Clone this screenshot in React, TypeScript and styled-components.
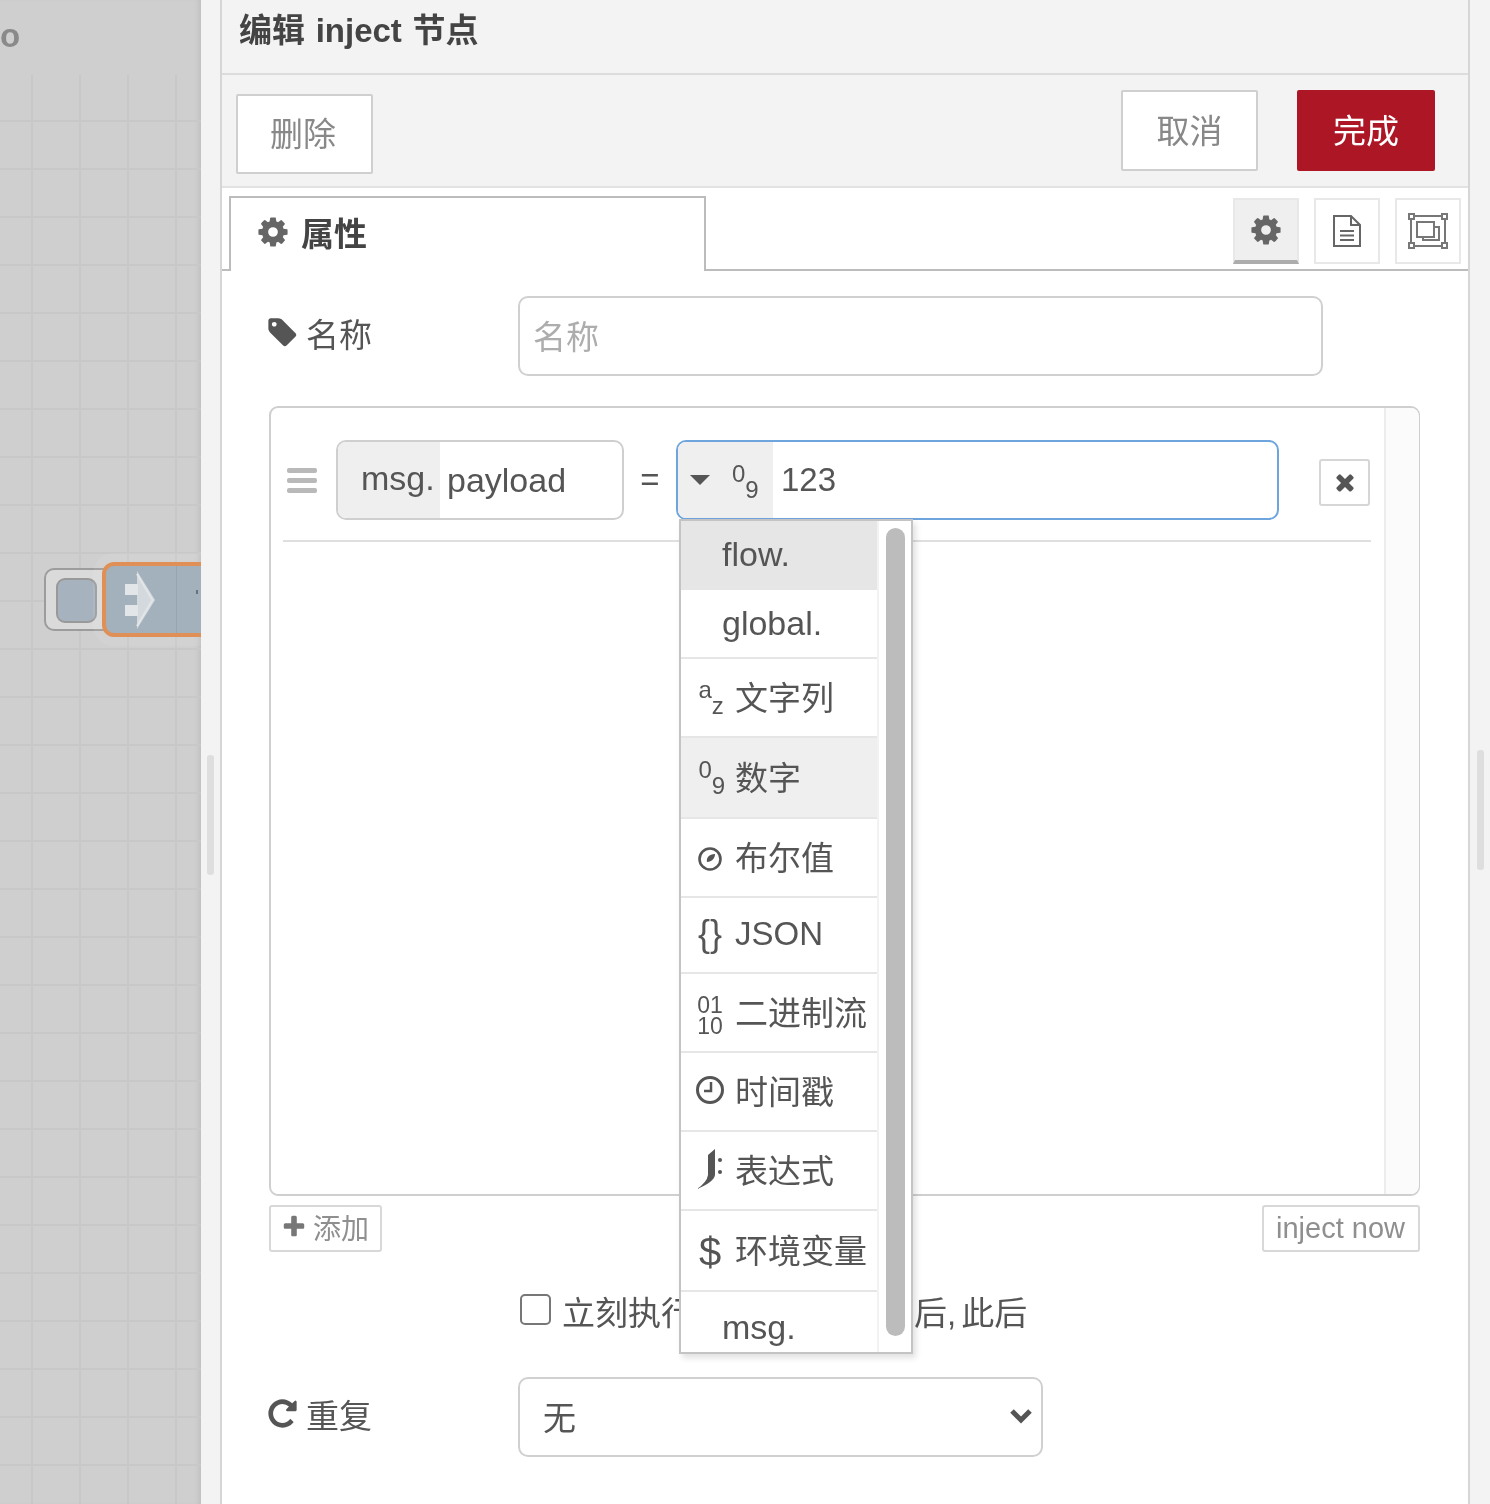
import React from 'react';
import styled, { createGlobalStyle } from 'styled-components';

const GlobalStyle = createGlobalStyle`
  html, body {
    margin: 0;
    height: 100%;
    overflow: hidden;
    background: #f3f3f3;
  }
  * { box-sizing: border-box; }
  #root {
    font-family: "Liberation Sans", "Noto Sans CJK SC", sans-serif;
    font-size: 33px;
    color: #555;
  }
`;

const Page = styled.div`
  width: 1490px;
  height: 1504px;
  display: flex;
  overflow: hidden;
  filter: blur(0.5px);
`;

/* workspace on the left, dimmed while the tray is open */
const Workspace = styled.div`
  width: 201px;
  flex: none;
  display: flex;
  flex-direction: column;
  background: #cfcfcf;
  box-shadow: inset -5px 0 5px -3px #bdbdbd;
`;

const WorkspaceTab = styled.div`
  height: 75px;
  padding-top: 16px;
  font-weight: bold;
  color: #8a8a8a;
  line-height: 40px;
`;

const Grid = styled.div`
  flex: 1;
  position: relative;
  overflow: hidden;
  background-image:
    linear-gradient(to right, #c8c8c8 2px, transparent 2px),
    linear-gradient(to bottom, #c8c8c8 2px, transparent 2px);
  background-size: 48px 48px;
  background-position: 31px 45px;
`;

const NodeButton = styled.div`
  position: absolute;
  left: 44px;
  top: 493px;
  width: 70px;
  height: 63px;
  padding: 8px 10px;
  background: #dadada;
  border: 2px solid #9c9c9c;
  border-radius: 10px;
`;

const NodeButtonFace = styled.div`
  width: 41px;
  height: 45px;
  background: #a6b2bd;
  border: 2px solid #999;
  border-radius: 9px;
`;

const NodeBody = styled.div`
  position: absolute;
  left: 102px;
  top: 487px;
  width: 110px;
  height: 75px;
  display: flex;
  background: #a3b1bd;
  border: 4px solid #e08f56;
  border-radius: 12px;
  box-shadow: 0 0 0 9px rgba(255, 255, 255, 0.08);
`;

const NodeIcon = styled.div`
  width: 71px;
  padding: 3px 0 0 16px;
  border-right: 1px solid #97a5b1;
`;

const NodeLabelEdge = styled.div`
  width: 2px;
  height: 4px;
  margin: 24px 0 0 19px;
  background: #66727c;
`;

const Gutter = styled.div<{ $left?: boolean }>`
  width: ${(p) => (p.$left ? 19 : 20)}px;
  flex: none;
  display: flex;
  justify-content: center;
  padding-top: ${(p) => (p.$left ? 755 : 750)}px;
  background: #f3f3f3;
`;

const GutterHandle = styled.div`
  width: 7px;
  height: 120px;
  background: #dedede;
  border-radius: 3px;
`;

const Tray = styled.div`
  width: 1250px;
  flex: none;
  display: flex;
  flex-direction: column;
  background: #fff;
  border-left: 2px solid #d6d6d6;
  border-right: 2px solid #d6d6d6;
`;

const TrayHeader = styled.div`
  height: 75px;
  padding: 11px 0 0 17px;
  background: #f3f3f3;
  border-bottom: 2px solid #dcdcdc;
  font-weight: bold;
  word-spacing: 1.5px;
  color: #444;
  line-height: 40px;
`;

const TrayToolbar = styled.div`
  height: 113px;
  display: flex;
  align-items: flex-start;
  gap: 39px;
  padding: 15px 33px 0 14px;
  background: #f3f3f3;
  border-bottom: 2px solid #e2e2e2;
`;

const ToolbarButton = styled.div<{ $primary?: boolean; $push?: boolean; $low?: boolean }>`
  width: ${(p) => (p.$primary ? 138 : 137)}px;
  height: ${(p) => (p.$low ? 80 : 81)}px;
  margin-top: ${(p) => (p.$low ? 4 : 0)}px;
  margin-right: ${(p) => (p.$push ? 'auto' : 0)};
  display: flex;
  align-items: center;
  justify-content: center;
  padding: 0 ${(p) => (p.$low ? 3 : 0)}px 4px 0;
  background: ${(p) => (p.$primary ? '#ad1625' : '#fff')};
  border: 2px solid ${(p) => (p.$primary ? '#ad1625' : '#cfcfcf')};
  border-radius: 2px;
  color: ${(p) => (p.$primary ? '#fff' : '#888')};
`;

const TabBar = styled.div`
  height: 83px;
  display: flex;
  align-items: flex-start;
  padding: 8px 7px 0 7px;
  border-bottom: 2px solid #bcbcbc;
`;

const Tab = styled.div`
  width: 477px;
  height: 75px;
  margin-bottom: -2px;
  display: flex;
  align-items: center;
  gap: 11px;
  padding: 0 0 6px 25px;
  background: #fff;
  border: 2px solid #bcbcbc;
  border-bottom: none;
  font-weight: bold;
  color: #444;
`;

const SideTools = styled.div`
  margin-left: auto;
  margin-top: 2px;
  display: flex;
  gap: 15px;
`;

const SideTool = styled.div<{ $active?: boolean }>`
  width: 66px;
  height: 66px;
  display: flex;
  align-items: center;
  justify-content: center;
  background: ${(p) => (p.$active ? '#efefef' : '#fff')};
  border: 2px solid #e8e8e8;
  border-bottom: ${(p) => (p.$active ? '4px solid #adadad' : '2px solid #e8e8e8')};
`;

const Form = styled.div`
  flex: 1;
  display: flex;
  flex-direction: column;
  padding: 25px 48px 0 47px;
`;

const FormRow = styled.div`
  display: flex;
  align-items: center;
`;

const FieldLabel = styled.div`
  width: 252px;
  margin-left: -3px;
  flex: none;
  display: flex;
  align-items: center;
  gap: 7px;
  margin-top: -7px;
`;

const TextField = styled.div<{ $width: number; $muted?: boolean }>`
  width: ${(p) => p.$width}px;
  height: 80px;
  display: flex;
  align-items: center;
  justify-content: space-between;
  padding: 0 8px 2px ${(p) => (p.$muted ? 13 : 23)}px;
  border: 2px solid #d0d0d0;
  border-radius: 10px;
  color: ${(p) => (p.$muted ? '#adadad' : '#555')};
`;

const ListBox = styled.div`
  height: 790px;
  margin-top: 30px;
  display: flex;
  border: 2px solid #cfcfcf;
  border-radius: 9px;
`;

const ListMain = styled.div`
  flex: 1;
`;

const ListGutter = styled.div`
  width: 35px;
  flex: none;
  background: #fbfbfb;
  border-left: 2px solid #ececec;
  border-radius: 0 8px 8px 0;
`;

const PropertyRow = styled.div`
  margin: 32px 13px 0 12px;
  padding: 0 1px 20px 4px;
  display: flex;
  align-items: center;
  border-bottom: 2px solid #dfdfdf;
`;

const DragHandle = styled.div`
  width: 30px;
  margin-right: 19px;
  display: flex;
  flex-direction: column;
  gap: 5px;
`;

const DragBar = styled.div`
  height: 5px;
  background: #b9b9b9;
  border-radius: 2px;
`;

const PropertyField = styled.div`
  width: 288px;
  height: 80px;
  display: flex;
  align-items: center;
  overflow: hidden;
  border: 2px solid #cfcfcf;
  border-radius: 10px;
  font-size: 34px;
`;

const PropertyPrefix = styled.div`
  width: 102px;
  height: 100%;
  flex: none;
  display: flex;
  align-items: center;
  padding: 0 0 4px 23px;
  background: #efefef;
`;

const PropertyValue = styled.div`
  padding-left: 7px;
`;

const Equals = styled.div`
  width: 52px;
  text-align: center;
`;

const ValueField = styled.div`
  position: relative;
  width: 603px;
  height: 80px;
  display: flex;
  align-items: center;
  border: 2px solid #6ea5dc;
  border-radius: 10px;
`;

const TypeButton = styled.div`
  width: 95px;
  height: 100%;
  flex: none;
  display: flex;
  align-items: center;
  gap: 22px;
  padding-left: 12px;
  background: #efefef;
  border-radius: 8px 0 0 8px;
`;

const Caret = styled.div`
  width: 0;
  height: 0;
  border-left: 10px solid transparent;
  border-right: 10px solid transparent;
  border-top: 10px solid #555;
`;

const FieldValue = styled.div`
  padding-left: 8px;
`;

const RemoveButton = styled.div`
  width: 51px;
  height: 47px;
  margin-left: 40px;
  margin-top: 4px;
  display: flex;
  align-items: center;
  justify-content: center;
  border: 2px solid #d6d6d6;
  border-radius: 3px;
`;

const Dropdown = styled.div`
  position: absolute;
  left: 1px;
  top: 77px;
  z-index: 5;
  width: 234px;
  height: 835px;
  display: flex;
  background: #fff;
  border: 2px solid #c4c4c4;
  box-shadow: 3px 4px 6px rgba(0, 0, 0, 0.12);
`;

const DropdownList = styled.div`
  width: 196px;
  flex: none;
  overflow: hidden;
`;

const DropdownItem = styled.div<{ $height: number; $bg?: string; $plain?: boolean }>`
  height: ${(p) => p.$height}px;
  display: flex;
  align-items: center;
  gap: 8px;
  padding: ${(p) => (p.$plain ? '0 0 0 41px' : '0 0 3px 12px')};
  background: ${(p) => p.$bg || '#fff'};
  border-bottom: 2px solid #e6e6e6;
  font-size: ${(p) => (p.$plain ? 34 : 33)}px;
  white-space: nowrap;
`;

const DropdownTrack = styled.div`
  flex: 1;
  padding: 7px 6px 0 7px;
  border-left: 2px solid #f2f2f2;
`;

const DropdownThumb = styled.div`
  height: 808px;
  background: #bcbcbc;
  border-radius: 10px;
`;

const IconSlot = styled.div`
  width: 34px;
  flex: none;
  display: flex;
  justify-content: center;
`;

const PairGlyph = styled.div`
  width: 23px;
  height: 40px;
  margin-top: 3px;
  display: flex;
  justify-content: space-between;
  font-size: 24px;
  line-height: 24px;
`;

const PairTop = styled.span`
  align-self: flex-start;
`;

const PairBottom = styled.span`
  align-self: flex-end;
`;

const BoolSlot = styled.div`
  display: flex;
  margin-top: 6px;
`;

const BinaryGlyph = styled.div`
  margin-top: 10px;
  font-size: 23px;
  line-height: 21px;
  text-align: center;
`;

const BraceGlyph = styled.div`
  font-size: 36px;
  line-height: 42px;
`;

const DollarGlyph = styled.div`
  font-size: 40px;
  line-height: 46px;
  margin-top: 6px;
`;

const ListButtons = styled.div`
  margin-top: 9px;
  display: flex;
  justify-content: space-between;
`;

const SmallButton = styled.div<{ $add?: boolean }>`
  height: 47px;
  display: flex;
  align-items: center;
  gap: 6px;
  padding: ${(p) => (p.$add ? '0 11px 3px 10px' : '0 13px 0 12px')};
  border: 2px solid #d8d8d8;
  border-radius: 3px;
  font-size: ${(p) => (p.$add ? 28 : 29)}px;
  color: #8f8f8f;
`;

const OnceRow = styled.div`
  margin-top: 40px;
  padding-left: 251px;
  height: 38px;
  display: flex;
  align-items: center;
  white-space: nowrap;
  word-spacing: -4px;
`;

const CheckBox = styled.div`
  width: 31px;
  height: 31px;
  margin-right: 11px;
  margin-top: -4px;
  background: #fff;
  border: 2px solid #777;
  border-radius: 5px;
`;

const DelayInput = styled.div`
  width: 134px;
  height: 50px;
  margin: 0 10px;
  border: 2px solid #d0d0d0;
  border-radius: 6px;
`;

const RepeatRow = styled(FormRow)`
  margin-top: 47px;
`;

const Icon = ({ d, size, color = '#555' }: { d: string; size: number; color?: string }) => (
  <svg width={size} height={size} viewBox="0 0 1792 1792" fill={color}>
    <path d={d} />
  </svg>
);

const COG =
  'M1152 896q0-106-75-181t-181-75-181 75-75 181 75 181 181 75 181-75 75-181zm512-109v222q0 12-8 23t-20 13l-185 28q-19 54-39 91 35 50 107 138 10 12 10 25t-9 23q-27 37-99 108t-94 71q-12 0-26-9l-138-108q-44 23-91 38-16 136-29 186-7 28-36 28h-222q-14 0-24.5-8.5t-11.5-21.5l-28-184q-49-16-90-37l-141 107q-10 9-25 9-14 0-25-11-126-114-165-168-7-10-7-23 0-12 8-23 15-21 51-66.5t54-70.5q-27-50-41-99l-183-27q-13-2-21-12.5t-8-23.5v-222q0-12 8-23t19-13l186-28q14-46 39-92-40-57-107-138-10-12-10-24 0-10 9-23 26-36 98.5-107.5t94.5-71.5q13 0 26 10l138 107q44-23 91-38 16-136 29-186 7-28 36-28h222q14 0 24.5 8.5t11.5 21.5l28 184q49 16 90 37l142-107q9-9 24-9 13 0 25 10 129 119 165 170 7 8 7 22 0 12-8 23-15 21-51 66.5t-54 70.5q26 50 41 98l183 28q13 2 21 12.5t8 23.5z';
const TAG =
  'M576 448q0-53-37.5-90.5t-90.5-37.5-90.5 37.5-37.5 90.5 37.5 90.5 90.5 37.5 90.5-37.5 37.5-90.5zm1067 576q0 53-37 90l-491 492q-39 37-91 37-53 0-90-37l-715-716q-38-37-64.5-101t-26.5-117v-416q0-52 38-90t90-38h416q53 0 117 26.5t102 64.5l715 714q37 39 37 91z';
const REPEAT =
  'M1664 256v448q0 26-19 45t-45 19h-448q-42 0-59-40-17-39 14-69l138-138q-148-137-349-137-104 0-198.5 40.5t-163.5 109.5-109.5 163.5-40.5 198.5 40.5 198.5 109.5 163.5 163.5 109.5 198.5 40.5q119 0 225-52t179-147q7-10 23-12 15 0 25 9l137 138q9 8 9.5 20.5t-7.5 22.5q-109 132-264 204.5t-327 72.5q-156 0-298-61t-245-164-164-245-61-298 61-298 164-245 245-164 298-61q147 0 284.5 55.5t244.5 156.5l130-129q29-31 70-14 39 17 39 59z';
const TIMES =
  'M1490 1322q0 40-28 68l-136 136q-28 28-68 28t-68-28l-294-294-294 294q-28 28-68 28t-68-28l-136-136q-28-28-28-68t28-68l294-294-294-294q-28-28-28-68t28-68l136-136q28-28 68-28t68 28l294 294 294-294q28-28 68-28t68 28l136 136q28 28 28 68t-28 68l-294 294 294 294q28 28 28 68z';
const PLUS =
  'M1600 736v192q0 40-28 68t-68 28h-416v416q0 40-28 68t-68 28h-192q-40 0-68-28t-28-68v-416h-416q-40 0-68-28t-28-68v-192q0-40 28-68t68-28h416v-416q0-40 28-68t68-28h192q40 0 68 28t28 68v416h416q40 0 68 28t28 68z';

const InjectArrow = () => (
  <svg width="34" height="62" viewBox="0 0 34 62">
    <path d="M15 2 L33 31 L15 60 Z" fill="#d4d9de" />
    <path d="M3 15 H16 V26 H3 Z M3 36 H16 V47 H3 Z" fill="#e3e6e8" />
    <path d="M15 5 L30.5 31 L15 57" fill="none" stroke="#e3e6e8" strokeWidth="2" />
  </svg>
);

const DocIcon = () => (
  <svg width="30" height="34" viewBox="0 0 30 34" fill="none" stroke="#666" strokeWidth="2">
    <path d="M2 2 H19 L28 11 V32 H2 Z" />
    <path d="M19 2 V11 H28" />
    <path d="M8 17 H22 M8 21.5 H22 M8 26 H22" />
  </svg>
);

const ExpandIcon = () => (
  <svg width="40" height="36" viewBox="0 0 40 36" fill="none" stroke="#777" strokeWidth="2">
    <path d="M5 3 H35 M5 33 H35 M3 5 V31 M37 5 V31" />
    <rect x="1" y="1" width="5" height="5" />
    <rect x="34" y="1" width="5" height="5" />
    <rect x="1" y="30" width="5" height="5" />
    <rect x="34" y="30" width="5" height="5" />
    <rect x="9" y="9" width="17" height="15" />
    <path d="M26 14 H31 V27 H15 V24" />
  </svg>
);

const BoolIcon = () => (
  <BoolSlot>
    <svg width="26" height="26" viewBox="0 0 26 26">
      <circle cx="13" cy="13" r="10.5" fill="none" stroke="#555" strokeWidth="2.6" />
      <path d="M10 16 C9 12 12 8 18 8 C18 12 15 16 10 16 Z" fill="#555" />
    </svg>
  </BoolSlot>
);

const ClockIcon = () => (
  <svg width="30" height="30" viewBox="0 0 30 30" fill="none" stroke="#555" strokeWidth="3">
    <circle cx="15" cy="15" r="12.5" />
    <path d="M16 7 V16 H9" strokeWidth="2.5" />
  </svg>
);

const JsonataIcon = () => (
  <svg width="28" height="42" viewBox="0 0 28 42" fill="#555">
    <path d="M19 1 L19 27 Q18 34 1 41 Q11 34 12 27 L12 7 Z" />
    <circle cx="24" cy="12" r="2" />
    <circle cx="24" cy="24" r="2" />
  </svg>
);

const ChevronIcon = () => (
  <svg width="24" height="18" viewBox="0 0 24 18" fill="none" stroke="#555" strokeWidth="5">
    <path d="M3 4 L12 13 L21 4" />
  </svg>
);

const Pair = ({ top, bottom }: { top: string; bottom: string }) => (
  <PairGlyph>
    <PairTop>{top}</PairTop>
    <PairBottom>{bottom}</PairBottom>
  </PairGlyph>
);

const typeOptions: { label: string; height: number; bg?: string; icon?: React.ReactNode }[] = [
  { label: 'flow.', height: 69, bg: '#e6e6e6' },
  { label: 'global.', height: 69 },
  { label: '文字列', height: 79, icon: <Pair top="a" bottom="z" /> },
  { label: '数字', height: 81, bg: '#efefef', icon: <Pair top="0" bottom="9" /> },
  { label: '布尔值', height: 79, icon: <BoolIcon /> },
  { label: 'JSON', height: 76, icon: <BraceGlyph>{'{}'}</BraceGlyph> },
  {
    label: '二进制流',
    height: 79,
    icon: (
      <BinaryGlyph>
        01
        <br />
        10
      </BinaryGlyph>
    ),
  },
  { label: '时间戳', height: 79, icon: <ClockIcon /> },
  { label: '表达式', height: 79, icon: <JsonataIcon /> },
  { label: '环境变量', height: 81, icon: <DollarGlyph>$</DollarGlyph> },
  { label: 'msg.', height: 72 },
];

export default function App() {
  return (
    <Page>
      <GlobalStyle />
      <Workspace>
        <WorkspaceTab>o</WorkspaceTab>
        <Grid>
          <NodeButton>
            <NodeButtonFace />
          </NodeButton>
          <NodeBody>
            <NodeIcon>
              <InjectArrow />
            </NodeIcon>
            <NodeLabelEdge />
          </NodeBody>
        </Grid>
      </Workspace>
      <Gutter $left>
        <GutterHandle />
      </Gutter>
      <Tray>
        <TrayHeader>编辑 inject 节点</TrayHeader>
        <TrayToolbar>
          <ToolbarButton $low $push>删除</ToolbarButton>
          <ToolbarButton>取消</ToolbarButton>
          <ToolbarButton $primary>完成</ToolbarButton>
        </TrayToolbar>
        <TabBar>
          <Tab>
            <Icon d={COG} size={34} color="#666" />
            属性
          </Tab>
          <SideTools>
            <SideTool $active>
              <Icon d={COG} size={34} color="#666" />
            </SideTool>
            <SideTool>
              <DocIcon />
            </SideTool>
            <SideTool>
              <ExpandIcon />
            </SideTool>
          </SideTools>
        </TabBar>
        <Form>
          <FormRow>
            <FieldLabel>
              <Icon d={TAG} size={33} />
              名称
            </FieldLabel>
            <TextField $width={805} $muted>名称</TextField>
          </FormRow>
          <ListBox>
            <ListMain>
              <PropertyRow>
                <DragHandle>
                  <DragBar />
                  <DragBar />
                  <DragBar />
                </DragHandle>
                <PropertyField>
                  <PropertyPrefix>msg.</PropertyPrefix>
                  <PropertyValue>payload</PropertyValue>
                </PropertyField>
                <Equals>=</Equals>
                <ValueField>
                  <TypeButton>
                    <Caret />
                    <Pair top="0" bottom="9" />
                  </TypeButton>
                  <FieldValue>123</FieldValue>
                  <Dropdown>
                    <DropdownList>
                      {typeOptions.map((o) => (
                        <DropdownItem key={o.label} $height={o.height} $bg={o.bg} $plain={!o.icon}>
                          {o.icon && <IconSlot>{o.icon}</IconSlot>}
                          {o.label}
                        </DropdownItem>
                      ))}
                    </DropdownList>
                    <DropdownTrack>
                      <DropdownThumb />
                    </DropdownTrack>
                  </Dropdown>
                </ValueField>
                <RemoveButton>
                  <Icon d={TIMES} size={26} />
                </RemoveButton>
              </PropertyRow>
            </ListMain>
            <ListGutter />
          </ListBox>
          <ListButtons>
            <SmallButton $add>
              <Icon d={PLUS} size={26} color="#777" />
              添加
            </SmallButton>
            <SmallButton>inject now</SmallButton>
          </ListButtons>
          <OnceRow>
            <CheckBox />
            立刻执行于
            <DelayInput />
            秒后, 此后
          </OnceRow>
          <RepeatRow>
            <FieldLabel>
              <Icon d={REPEAT} size={33} />
              重复
            </FieldLabel>
            <TextField $width={525}>
              无
              <ChevronIcon />
            </TextField>
          </RepeatRow>
        </Form>
      </Tray>
      <Gutter>
        <GutterHandle />
      </Gutter>
    </Page>
  );
}
